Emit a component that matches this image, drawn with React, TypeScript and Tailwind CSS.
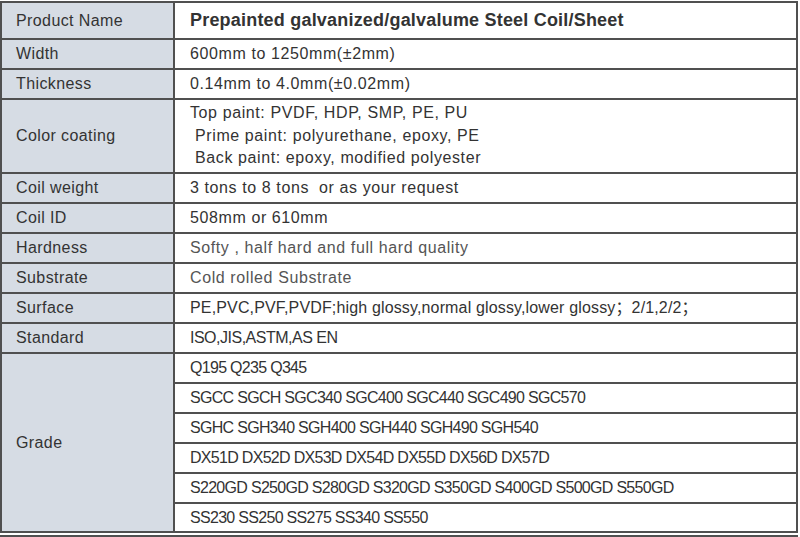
const font = { fontFamily: '"Liberation Sans", Arial, "Noto Sans CJK SC", sans-serif' }

const rows: { label: string; value: string[]; tone?: string; h: string }[] = [
  { label: 'Width', value: ['600mm to 1250mm(±2mm)'], h: 'h-[30px]' },
  { label: 'Thickness', value: ['0.14mm to 4.0mm(±0.02mm)'], h: 'h-[30px]' },
  {
    label: 'Color coating',
    value: ['Top paint: PVDF, HDP, SMP, PE, PU', ' Prime paint: polyurethane, epoxy, PE', ' Back paint: epoxy, modified polyester'],
    h: 'h-[74px]',
  },
  { label: 'Coil weight', value: ['3 tons to 8 tons  or as your request'], h: 'h-[30px]' },
  { label: 'Coil ID', value: ['508mm or 610mm'], h: 'h-[30px]' },
  { label: 'Hardness', value: ['Softy , half hard and full hard quality'], tone: 'text-[#555]', h: 'h-[30px]' },
  { label: 'Substrate', value: ['Cold rolled Substrate'], tone: 'text-[#555]', h: 'h-[30px]' },
]

const grades = [
  'Q195 Q235 Q345',
  'SGCC SGCH SGC340 SGC400 SGC440 SGC490 SGC570',
  'SGHC SGH340 SGH400 SGH440 SGH490 SGH540',
  'DX51D DX52D DX53D DX54D DX55D DX56D DX57D',
  'S220GD S250GD S280GD S320GD S350GD S400GD S500GD S550GD',
  'SS230 SS250 SS275 SS340 SS550',
]

const cellL = 'border-2 border-[#505050] bg-[#d6dce4] pl-[14px] text-[16px] tracking-[0.4px] text-[#333] align-middle'
const cellR = 'border-2 border-[#505050] bg-white pl-[15px] text-[#333] align-middle'

export default function App() {
  return (
    <div className="w-[800px] h-[537px] bg-white overflow-hidden pt-[1px]" style={font}>
      <table className="w-[798px] border-collapse table-fixed">
        <colgroup>
          <col className="w-[173px]" />
          <col />
        </colgroup>
        <tbody>
          <tr className="h-[37px]">
            <td className={cellL}>Product Name</td>
            <td className={`${cellR} text-[18px] font-bold tracking-[0.2px] text-[#111]`}>
              Prepainted galvanized/galvalume Steel Coil/Sheet
            </td>
          </tr>
          {rows.map(r => (
            <tr key={r.label} className={r.h}>
              <td className={cellL}>{r.label}</td>
              <td className={`${cellR} text-[16px] tracking-[0.6px] leading-[22.5px] ${r.tone ?? ''}`}>
                {r.value.map((v, i) => (
                  <div key={i} className="whitespace-pre">{v}</div>
                ))}
              </td>
            </tr>
          ))}
          <tr className="h-[30px]">
            <td className={cellL}>Surface</td>
            <td className={`${cellR} text-[16px] tracking-[0.15px]`}>
              PE,PVC,PVF,PVDF;high glossy,normal glossy,lower glossy；2/1,2/2；
            </td>
          </tr>
          <tr className="h-[30px]">
            <td className={cellL}>Standard</td>
            <td className={`${cellR} text-[16px] tracking-[-0.5px]`}>ISO,JIS,ASTM,AS EN</td>
          </tr>
          {grades.map((g, i) => (
            <tr key={g} className={i === grades.length - 1 ? 'h-[29px]' : 'h-[30px]'}>
              {i === 0 && (
                <td rowSpan={6} className={cellL}>
                  Grade
                </td>
              )}
              <td className={`${cellR} text-[16px] tracking-[-0.7px]`}>{g}</td>
            </tr>
          ))}
        </tbody>
      </table>
      <div className="mt-[2px] h-[2px] w-[798px] bg-[#505050]" />
    </div>
  )
}
